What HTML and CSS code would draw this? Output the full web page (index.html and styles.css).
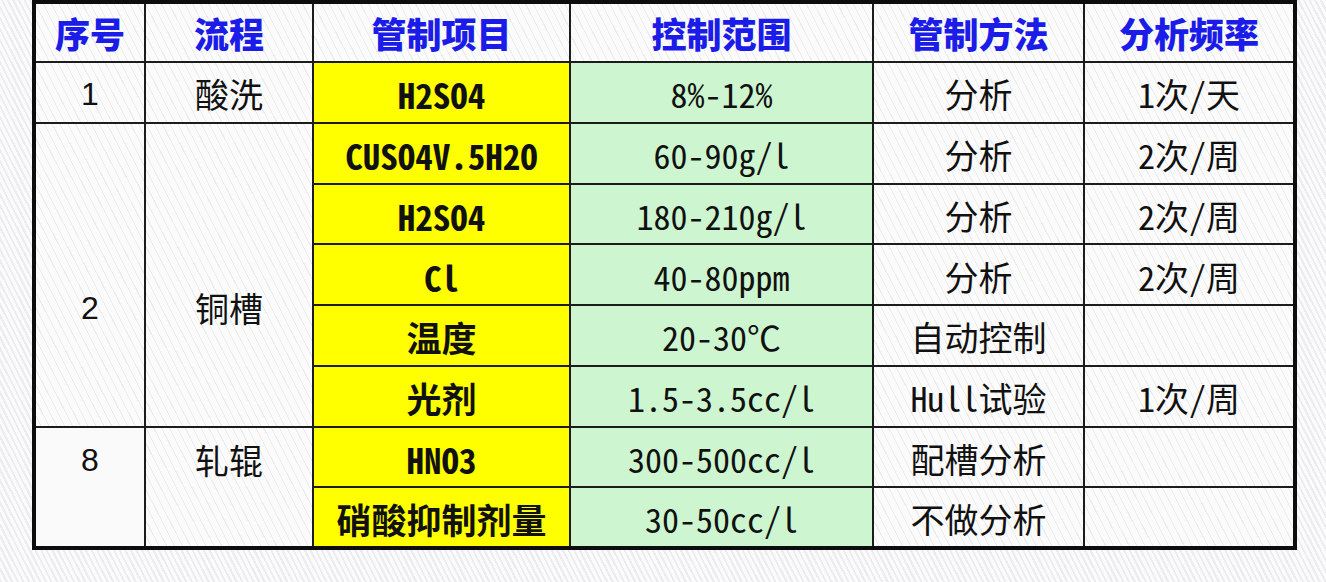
FILE: index.html
```html
<!DOCTYPE html>
<html lang="zh-CN">
<head>
<meta charset="utf-8">
<title>管制项目</title>
<link rel="stylesheet" href="styles.css">
</head>
<body>
<table class="spec">
  <colgroup>
    <col class="c-no">
    <col class="c-flow">
    <col class="c-item">
    <col class="c-range">
    <col class="c-method">
    <col class="c-freq">
  </colgroup>
  <thead>
    <tr class="head">
      <th>序号</th>
      <th>流程</th>
      <th>管制项目</th>
      <th>控制范围</th>
      <th>管制方法</th>
      <th>分析频率</th>
    </tr>
  </thead>
  <tbody>
    <tr>
      <td class="num">1</td>
      <td>酸洗</td>
      <td class="item">H2SO4</td>
      <td class="range">8%-12%</td>
      <td>分析</td>
      <td>1次/天</td>
    </tr>
    <tr>
      <td class="num group-a" rowspan="5">2</td>
      <td class="group-a" rowspan="5">铜槽</td>
      <td class="item">CUSO4V.5H2O</td>
      <td class="range">60-90g/l</td>
      <td>分析</td>
      <td>2次/周</td>
    </tr>
    <tr>
      <td class="item">H2SO4</td>
      <td class="range">180-210g/l</td>
      <td>分析</td>
      <td>2次/周</td>
    </tr>
    <tr>
      <td class="item">Cl</td>
      <td class="range">40-80ppm</td>
      <td>分析</td>
      <td>2次/周</td>
    </tr>
    <tr>
      <td class="item">温度</td>
      <td class="range">20-30℃</td>
      <td>自动控制</td>
      <td></td>
    </tr>
    <tr>
      <td class="item">光剂</td>
      <td class="range">1.5-3.5cc/l</td>
      <td>Hull试验</td>
      <td>1次/周</td>
    </tr>
    <tr>
      <td class="num group-b plain" rowspan="2">8</td>
      <td class="group-b" rowspan="2">轧辊</td>
      <td class="item">HNO3</td>
      <td class="range">300-500cc/l</td>
      <td>配槽分析</td>
      <td></td>
    </tr>
    <tr>
      <td class="item">硝酸抑制剂量</td>
      <td class="range">30-50cc/l</td>
      <td>不做分析</td>
      <td></td>
    </tr>
  </tbody>
</table>
</body>
</html>
```

FILE: styles.css
```css
html, body {
  margin: 0;
  padding: 0;
}

body {
  width: 1326px;
  height: 582px;
  overflow: hidden;
  background-color: #f5f5f7;
  background-image: repeating-linear-gradient(63deg, #ececef 0 2px, #fbfbfc 2px 5px);
  font-family: "Noto Sans Mono CJK SC", "Noto Sans CJK SC", "DejaVu Sans Mono", monospace;
  color: #111;
}

.spec {
  margin-left: 32px;
  margin-top: 0;
  width: 1265px;
  table-layout: fixed;
  border-collapse: collapse;
  border: 4px solid #0d0d0d;
}

.c-no { width: 111px; }
.c-flow { width: 168px; }
.c-item { width: 257px; }
.c-range { width: 303px; }
.c-method { width: 211px; }
.c-freq { width: 211px; }

.spec th,
.spec td {
  border: 2px solid #1c1c1c;
  padding: 0;
  text-align: center;
  vertical-align: middle;
  line-height: 40px;
  font-size: 34px;
  background-color: #fafafa;
  background-image: repeating-linear-gradient(63deg, #fbfbfb 0 4px, #ececee 4px 5px, #fbfbfb 5px 7px);
}

.spec tbody tr {
  height: 60.75px;
}

.spec .head {
  height: 60px;
}

.spec th {
  color: #1c1ce8;
  font-family: "Noto Sans CJK SC", sans-serif;
  font-weight: 900;
  font-size: 35px;
  padding: 0;
}

.spec td {
  font-weight: 400;
  padding-top: 4px;
}

.spec td.num {
  font-family: "Liberation Sans", Arial, sans-serif;
  font-size: 32px;
}

.spec td.item {
  background: #ffff00;
  font-weight: 700;
  font-size: 35px;
}

.spec td.range {
  background: #cdf5d0;
}

.spec td.group-a {
  vertical-align: top;
  padding-top: 164px;
}

.spec td.group-b {
  vertical-align: top;
  padding-top: 12px;
}

.spec td.plain {
  background: #fafafa;
}
```
